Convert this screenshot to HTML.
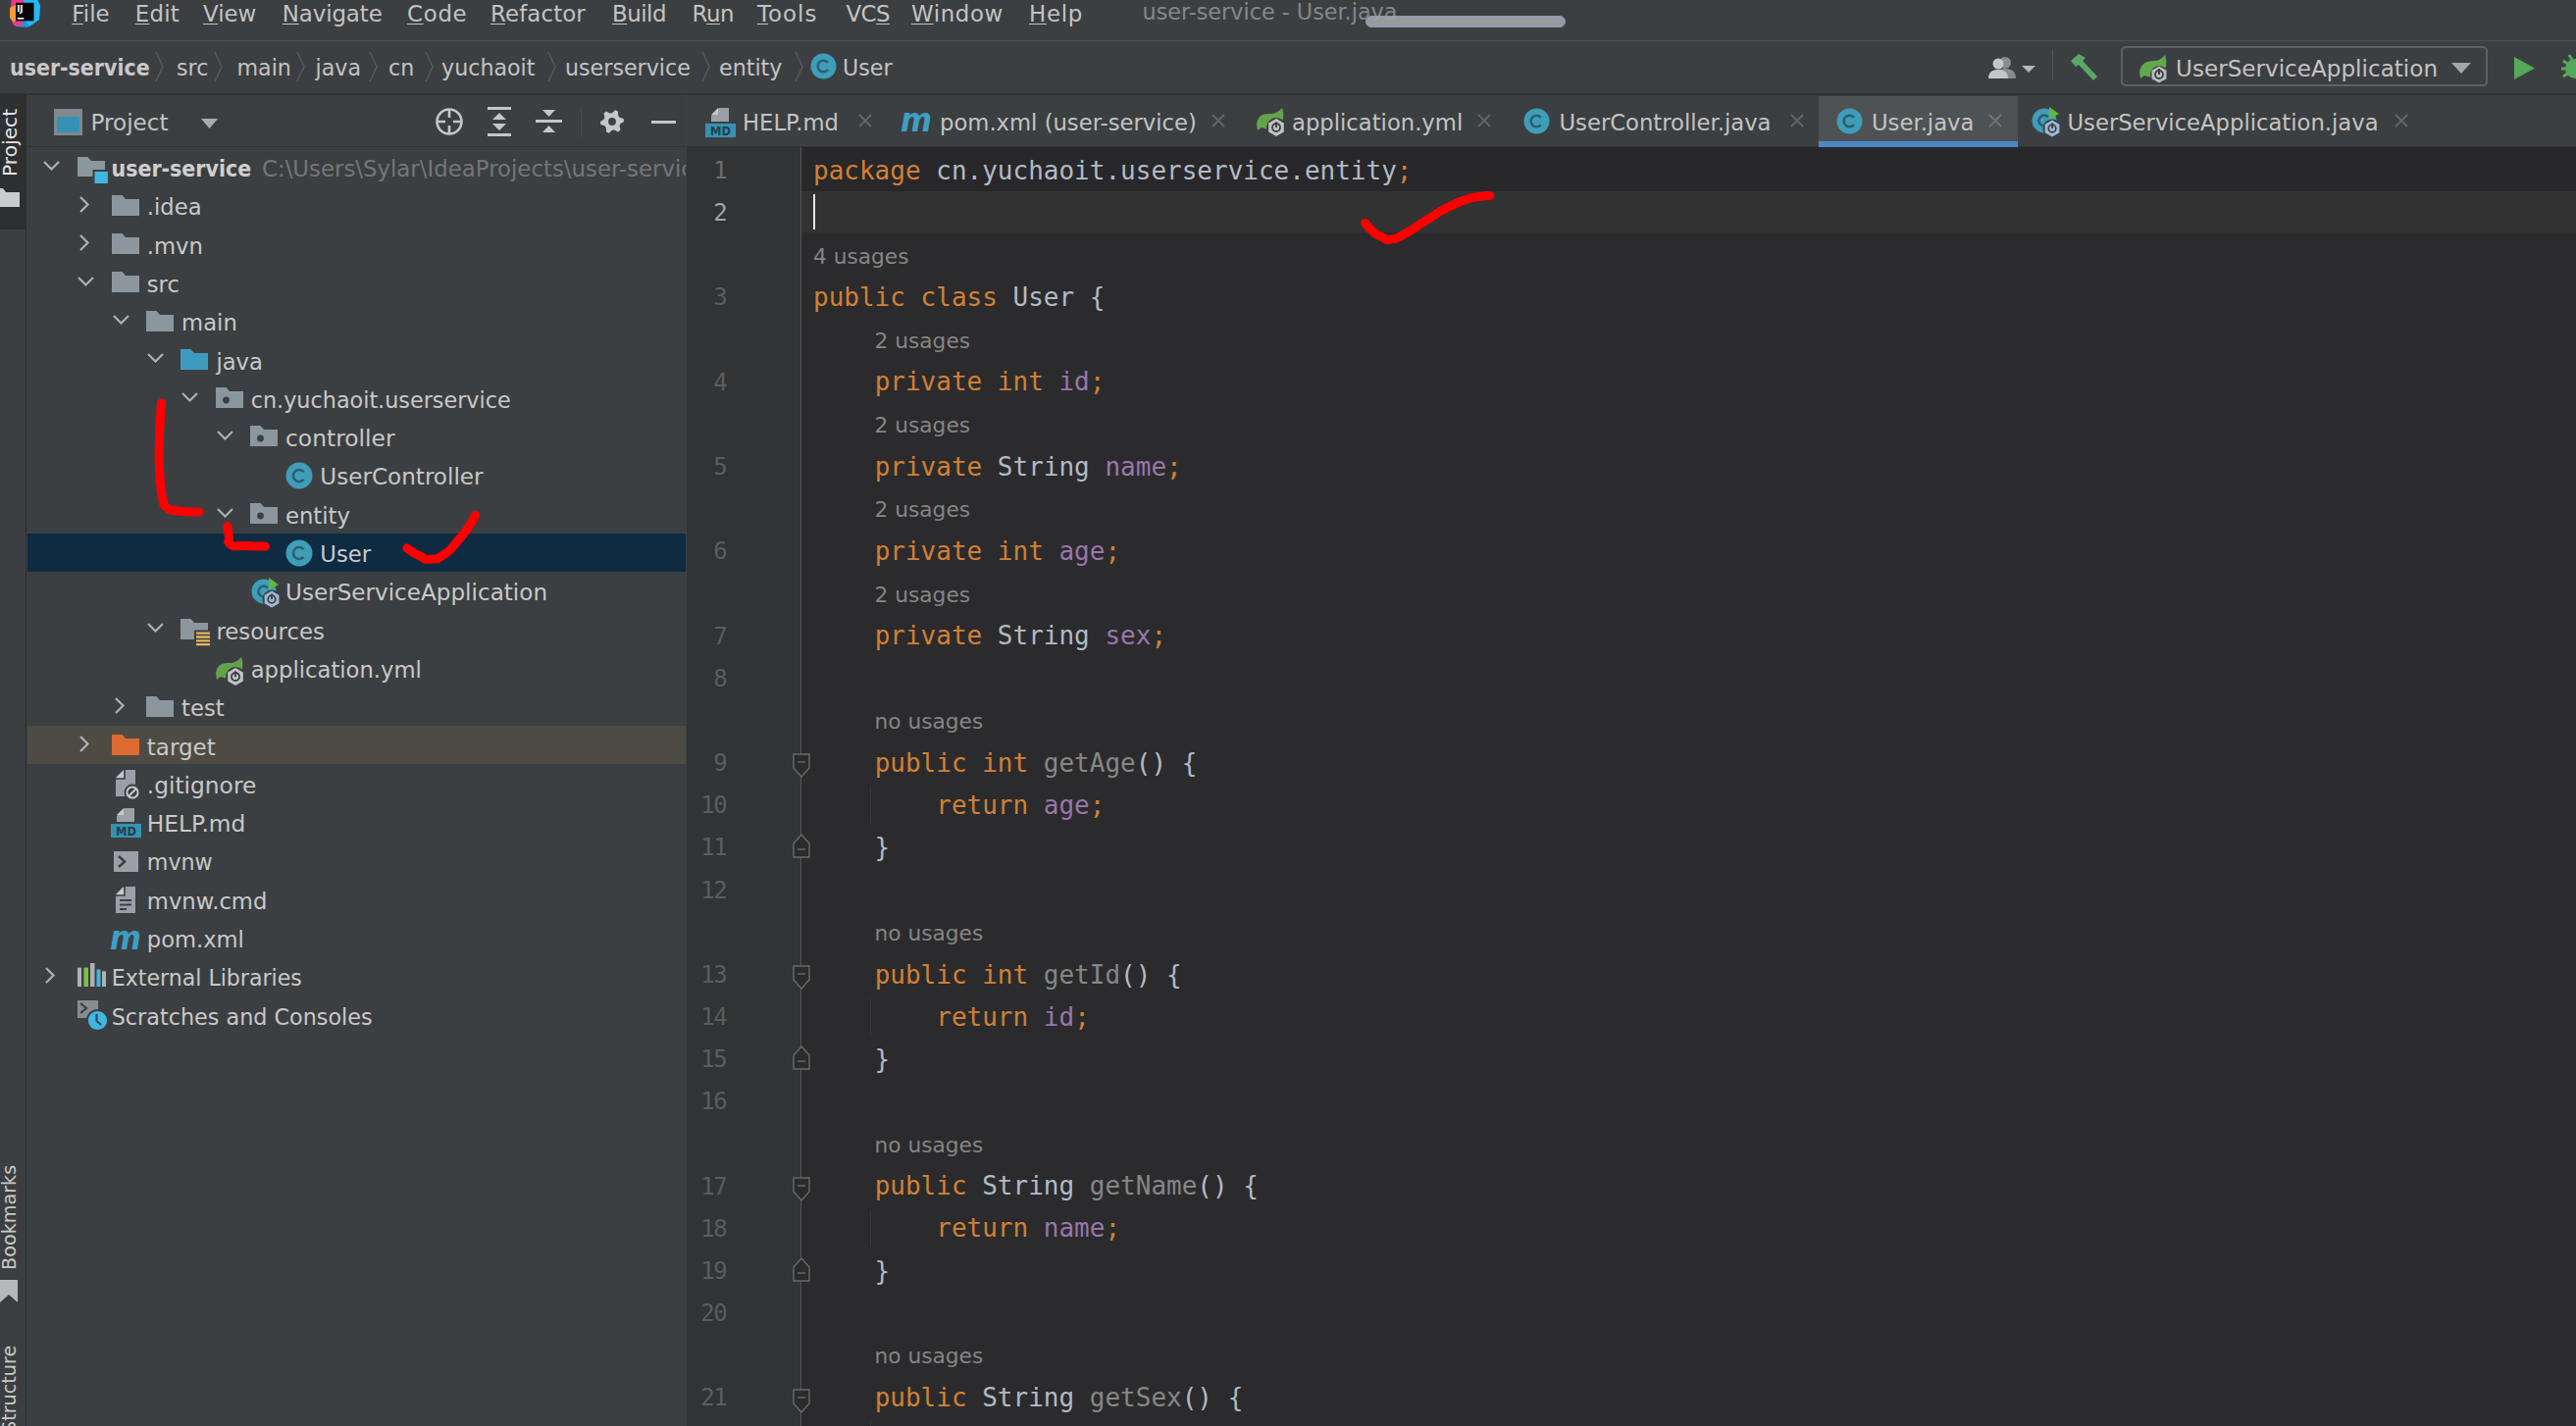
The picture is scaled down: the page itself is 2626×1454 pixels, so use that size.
<!DOCTYPE html>
<html lang="en"><head><meta charset="utf-8"><title>user-service - User.java</title>
<style>
*{box-sizing:border-box;margin:0;padding:0}
html,body{width:2626px;height:1454px;overflow:hidden;background:#3c3f41}
body{position:relative;font-family:"DejaVu Sans","Liberation Sans",sans-serif;font-size:22.7px;color:#bbbbbb;line-height:1}
.abs{position:absolute}
.t{position:absolute;white-space:pre;line-height:30px;height:30px}
.mn u{text-decoration:underline;text-underline-offset:1.5px;text-decoration-thickness:1.3px}
.code{position:absolute;left:829px;white-space:pre;font-family:"DejaVu Sans Mono","Liberation Mono",monospace;font-size:26px;line-height:43.15px;height:43.15px;color:#b1bac4}
.ln{position:absolute;left:700.4px;width:40px;text-align:right;font-family:"DejaVu Sans Mono","Liberation Mono",monospace;font-size:24px;letter-spacing:-1.4px;line-height:43.15px;height:43.15px;color:#5a5d60;margin-top:0.3px}
.hint{position:absolute;white-space:pre;font-size:21.7px;line-height:43.15px;height:43.15px;color:#858585}
.k{color:#d08036} .f{color:#9876aa} .u{color:#868686}
svg{position:absolute;overflow:visible}
</style></head>
<body>
<div class="abs" style="left:0;top:0;width:2626px;height:41.5px;background:#3c3f41;border-bottom:1.5px solid #4f5254"></div>
<svg style="left:10px;top:-4px" width="32" height="33" viewBox="0 0 32 33">
<polygon points="2,4 12,0 26,0 31,9 30,24 18,32 6,31 0,20" fill="#1f8fe3"/>
<polygon points="14,0 27,1 31,10 30,24 20,31 12,20" fill="#22b8f2"/>
<polygon points="2,4 13,0 16,12 12,31 4,30 0,20" fill="#f0388a"/>
<polygon points="0,12 6,9 9,20 4,27 0,22" fill="#f89a36"/>
<rect x="6" y="6.800" width="18.500" height="18.500" fill="#050505"/>
<rect x="7.800" y="22" width="6.500" height="1.600" fill="#fff"/>
<text x="7.200" y="16" font-family='"DejaVu Sans","Liberation Sans",sans-serif' font-weight="bold" font-size="8.500" fill="#fff">IJ</text>
</svg>
<div class="t mn" style="left:73.25px;top:-1px;font-size:22.9px;color:#c3c3c3"><u>F</u>ile</div>
<div class="t mn" style="left:137.75px;top:-1px;font-size:22.9px;color:#c3c3c3;letter-spacing:0.2px"><u>E</u>dit</div>
<div class="t mn" style="left:207px;top:-1px;font-size:22.9px;color:#c3c3c3"><u>V</u>iew</div>
<div class="t mn" style="left:287.75px;top:-1px;font-size:22.9px;color:#c3c3c3;letter-spacing:-0.1px"><u>N</u>avigate</div>
<div class="t mn" style="left:415px;top:-1px;font-size:22.9px;color:#c3c3c3;letter-spacing:0.7px"><u>C</u>ode</div>
<div class="t mn" style="left:500px;top:-1px;font-size:22.9px;color:#c3c3c3;letter-spacing:0.1px"><u>R</u>efactor</div>
<div class="t mn" style="left:624px;top:-1px;font-size:22.9px;color:#c3c3c3;letter-spacing:-0.5px"><u>B</u>uild</div>
<div class="t mn" style="left:705.5px;top:-1px;font-size:22.9px;color:#c3c3c3;letter-spacing:-0.4px">R<u>u</u>n</div>
<div class="t mn" style="left:772px;top:-1px;font-size:22.9px;color:#c3c3c3;letter-spacing:1.0px"><u>T</u>ools</div>
<div class="t mn" style="left:862.5px;top:-1px;font-size:22.9px;color:#c3c3c3;letter-spacing:-0.6px">VC<u>S</u></div>
<div class="t mn" style="left:929px;top:-1px;font-size:22.9px;color:#c3c3c3;letter-spacing:0.6px"><u>W</u>indow</div>
<div class="t mn" style="left:1049px;top:-1px;font-size:22.9px;color:#c3c3c3;letter-spacing:0.7px"><u>H</u>elp</div>
<div class="t" style="left:1164.5px;top:-3px;font-size:22.3px;color:#848789">user-service - User.java</div>
<div class="abs" style="left:1392px;top:16px;width:204px;height:12px;border-radius:6px;background:rgba(160,163,167,0.92);border:1px solid #809cc6"></div>
<div class="abs" style="left:0;top:95px;width:2626px;height:2px;background:#2f3133"></div>
<div class="t" style="left:10px;top:54px;font-family:'DejaVu Sans Condensed','DejaVu Sans',sans-serif;font-stretch:condensed;font-weight:bold;font-size:22.9px;color:#c9c9c9">user-service</div>
<div class="t" style="left:180px;top:54px;font-size:22.2px;color:#c3c3c3">src</div>
<div class="t" style="left:241.5px;top:54px;font-size:22.2px;color:#c3c3c3">main</div>
<div class="t" style="left:321.5px;top:54px;font-size:22.2px;color:#c3c3c3">java</div>
<div class="t" style="left:396px;top:54px;font-size:22.2px;color:#c3c3c3">cn</div>
<div class="t" style="left:450px;top:54px;font-size:22.2px;color:#c3c3c3">yuchaoit</div>
<div class="t" style="left:576px;top:54px;font-size:22.2px;color:#c3c3c3">userservice</div>
<div class="t" style="left:733px;top:54px;font-size:22.2px;color:#c3c3c3">entity</div>
<div class="t" style="left:859px;top:54px;font-size:22.2px;color:#c3c3c3">User</div>
<svg style="left:158px;top:53px" width="9" height="30" viewBox="0 0 9 30"><path d="M1 0 L8 15 L1 30" fill="none" stroke="#565a5c" stroke-width="1.5"/></svg>
<svg style="left:218px;top:53px" width="9" height="30" viewBox="0 0 9 30"><path d="M1 0 L8 15 L1 30" fill="none" stroke="#565a5c" stroke-width="1.5"/></svg>
<svg style="left:302px;top:53px" width="9" height="30" viewBox="0 0 9 30"><path d="M1 0 L8 15 L1 30" fill="none" stroke="#565a5c" stroke-width="1.5"/></svg>
<svg style="left:375.5px;top:53px" width="9" height="30" viewBox="0 0 9 30"><path d="M1 0 L8 15 L1 30" fill="none" stroke="#565a5c" stroke-width="1.5"/></svg>
<svg style="left:433px;top:53px" width="9" height="30" viewBox="0 0 9 30"><path d="M1 0 L8 15 L1 30" fill="none" stroke="#565a5c" stroke-width="1.5"/></svg>
<svg style="left:558px;top:53px" width="9" height="30" viewBox="0 0 9 30"><path d="M1 0 L8 15 L1 30" fill="none" stroke="#565a5c" stroke-width="1.5"/></svg>
<svg style="left:714.5px;top:53px" width="9" height="30" viewBox="0 0 9 30"><path d="M1 0 L8 15 L1 30" fill="none" stroke="#565a5c" stroke-width="1.5"/></svg>
<svg style="left:809.5px;top:53px" width="9" height="30" viewBox="0 0 9 30"><path d="M1 0 L8 15 L1 30" fill="none" stroke="#565a5c" stroke-width="1.5"/></svg>
<svg style="left:825.5px;top:54px" width="27" height="27" viewBox="0 0 28 28"><circle cx="14" cy="14" r="13.5" fill="#3f9db8"/><path d="M18.6 10.2 A6 6 0 1 0 18.6 17.8" fill="none" stroke="#2a5f73" stroke-width="2.6"/></svg>
<svg style="left:2027px;top:56px" width="50" height="26" viewBox="0 0 50 26">
<circle cx="17" cy="8" r="6" fill="#8a8d8f"/><path d="M6 24 Q6 14 17 14 Q28 14 28 24 Z" fill="#8a8d8f"/>
<circle cx="10" cy="9" r="5.5" fill="#c4c6c8"/><path d="M0 24 Q0 15 10 15 Q20 15 20 24 Z" fill="#c4c6c8"/>
<path d="M34 11 L48 11 L41 18 Z" fill="#b4b6b8"/></svg>
<div class="abs" style="left:2092px;top:51px;width:1px;height:31px;background:#55585a"></div>
<svg style="left:2109px;top:54px" width="31" height="28" viewBox="0 0 31 28">
<path d="M2 8 L10 1 L17 5 L14 8 L29 24 L25 28 L10 12 L7 14 Z" fill="#59a869"/></svg>
<div class="abs" style="left:2162px;top:47px;width:374px;height:41px;border:2px solid #5e6163;border-radius:5px"></div>
<svg style="left:2180px;top:56px" width="32" height="30" viewBox="0 0 32 30">
<path d="M1 18 Q2 6 16 6 Q22 6 27 0 Q31 12 24 19 Q16 25 6 21 L2 24 Z" fill="#5fa84b"/>
<circle cx="21" cy="20" r="9" fill="#3c3f41"/>
<polygon points="21,11.5 28.5,15.7 28.5,24.3 21,28.5 13.5,24.3 13.5,15.7" fill="#b9bcbe"/>
<circle cx="21" cy="20" r="4" fill="none" stroke="#3c3f41" stroke-width="1.8"/><rect x="20" y="14" width="2" height="6" fill="#3c3f41"/>
</svg>
<div class="t" style="left:2218px;top:55px;font-size:23.1px;color:#c3c3c3">UserServiceApplication</div>
<svg style="left:2499px;top:64px" width="20" height="11" viewBox="0 0 20 11"><path d="M0 0 L20 0 L10 11 Z" fill="#a4a6a8"/></svg>
<svg style="left:2563px;top:58px" width="21" height="23" viewBox="0 0 21 23"><path d="M0 0 L21 11.5 L0 23 Z" fill="#56a85a"/></svg>
<svg style="left:2611px;top:56px" width="26" height="26" viewBox="0 0 26 26"><circle cx="14" cy="14" r="10" fill="#56a85a"/><path d="M2 6 L8 10 M0 14 L6 14 M2 22 L8 18 M8 0 L11 5" stroke="#56a85a" stroke-width="3"/></svg>
<div class="abs" style="left:0;top:97px;width:27px;height:1357px;background:#3c3f41;border-right:1px solid #2a2c2e"></div>
<div class="abs" style="left:0;top:97px;width:27px;height:137px;background:#2d2f30"></div>
<div class="abs" style="left:-3px;top:180px;white-space:pre;font-size:20.2px;line-height:26px;height:26px;transform-origin:0 0;transform:rotate(-90deg);color:#e4e4e4">Project</div>
<svg style="left:-8px;top:192px" width="28" height="19" viewBox="0 0 28 19"><path d="M0 0 L11 0 L14 4 L28 4 L28 19 L0 19 Z" fill="#c9ccce"/></svg>
<div class="abs" style="left:-3px;top:1295px;white-space:pre;font-size:19.2px;line-height:26px;height:26px;transform-origin:0 0;transform:rotate(-90deg);color:#c8c8c8">Bookmarks</div>
<svg style="left:0px;top:1305px" width="18" height="23" viewBox="0 0 18 23"><path d="M0 0 L18 0 L18 23 L9 15 L0 23 Z" fill="#b6b9bb"/></svg>
<div class="abs" style="left:-3px;top:1460.5px;white-space:pre;font-size:19.2px;line-height:26px;height:26px;transform-origin:0 0;transform:rotate(-90deg);color:#c8c8c8">Structure</div>
<div class="abs" style="left:28px;top:149px;width:671px;height:1px;background:#313335"></div>
<div class="abs" style="left:699px;top:97px;width:1px;height:1357px;background:#3f4244"></div>
<svg style="left:55px;top:111px" width="29" height="27" viewBox="0 0 29 27">
<rect x="1.5" y="1.5" width="26" height="24" fill="#3592b4" stroke="#7e888e" stroke-width="3"/>
<rect x="1.5" y="1.5" width="26" height="6.5" fill="#7e888e"/></svg>
<div class="t" style="left:92.5px;top:110px;font-size:23.1px;color:#c3c3c3">Project</div>
<svg style="left:205px;top:121px" width="17" height="10" viewBox="0 0 17 10"><path d="M0 0 L17 0 L8.5 10 Z" fill="#a9acae"/></svg>
<svg style="left:443px;top:109px" width="30" height="30" viewBox="0 0 30 30"><circle cx="15" cy="15" r="12.5" fill="none" stroke="#c4c6c8" stroke-width="2.6"/>
<path d="M15 2 V11 M15 19 V28 M2 15 H11 M19 15 H28" stroke="#c4c6c8" stroke-width="2.6"/></svg>
<svg style="left:496px;top:109px" width="26" height="30" viewBox="0 0 26 30"><path d="M1 1.5 H25 M1 28.5 H25" stroke="#c4c6c8" stroke-width="3"/>
<path d="M13 6 L20 13 H6 Z M13 24 L20 17 H6 Z" fill="#c4c6c8"/></svg>
<svg style="left:546px;top:110px" width="27" height="27" viewBox="0 0 27 27"><path d="M0 13.5 H27" stroke="#c4c6c8" stroke-width="3"/>
<path d="M13.5 9 L20 2 H7 Z M13.5 18 L20 25 H7 Z" fill="#c4c6c8"/></svg>
<div class="abs" style="left:592px;top:108px;width:1px;height:32px;background:#4a4d4f"></div>
<svg style="left:610.5px;top:111px" width="26" height="26" viewBox="0 0 28 28"><polygon points="26.56,10.64 27.00,14.00 23.08,16.43 22.14,18.70 23.19,23.19 20.50,25.26 16.43,23.08 14.00,23.40 10.64,26.56 7.50,25.26 7.35,20.65 5.86,18.70 1.44,17.36 1.00,14.00 4.92,11.57 5.86,9.30 4.81,4.81 7.50,2.74 11.57,4.92 14.00,4.60 17.36,1.44 20.50,2.74 20.65,7.35 22.14,9.30" fill="#c4c6c8"/><circle cx="14" cy="14" r="4.2" fill="#3c3f41"/></svg>
<div class="abs" style="left:664px;top:122.5px;width:25px;height:3px;background:#c4c6c8"></div>
<div class="abs" style="left:28px;top:543.5px;width:671px;height:39.3px;background:#0e2b42"></div>
<div class="abs" style="left:28px;top:739.5px;width:671px;height:39.3px;background:#4e4c42"></div>
<svg style="left:44.0px;top:163.85000000000002px" width="17" height="10" viewBox="0 0 17 10"><path d="M1 1 L8.5 8.5 L16 1" fill="none" stroke="#aeb1b3" stroke-width="2.2"/></svg>
<svg style="left:78.5px;top:159.75px" width="32" height="28" viewBox="0 0 32 28"><path d="M0 0 L10.5 0 L14 4 L28 4 L28 20 L0 20 Z" fill="#8b969d"/><rect x="15.500" y="13" width="16" height="15" fill="#3c3f41"/><rect x="17.500" y="15" width="13.400" height="12" fill="#40b6e0"/></svg>
<div class="t" style="left:113.5px;top:157.1px;font-family:'DejaVu Sans Condensed','DejaVu Sans',sans-serif;font-stretch:condensed;font-weight:bold;font-size:22.9px;color:#cfcfcf">user-service</div>
<div class="t" style="left:267px;top:157.1px;width:432px;overflow:hidden;color:#737678;font-size:22.85px">C:\Users\Sylar\IdeaProjects\user-service</div>
<svg style="left:81.3px;top:200.15px" width="10" height="17" viewBox="0 0 10 17"><path d="M1 1 L8.5 8.5 L1 16" fill="none" stroke="#aeb1b3" stroke-width="2.2"/></svg>
<svg style="left:113.8px;top:198.65px" width="28" height="21" viewBox="0 0 28 21"><path d="M0 0 L10.5 0 L14 4 L28 4 L28 21 L0 21 Z" fill="#8b969d"/></svg>
<div class="t" style="left:149.8px;top:196.3px;color:#c8c8c8">.idea</div>
<svg style="left:81.3px;top:239.45000000000002px" width="10" height="17" viewBox="0 0 10 17"><path d="M1 1 L8.5 8.5 L1 16" fill="none" stroke="#aeb1b3" stroke-width="2.2"/></svg>
<svg style="left:113.8px;top:237.95000000000002px" width="28" height="21" viewBox="0 0 28 21"><path d="M0 0 L10.5 0 L14 4 L28 4 L28 21 L0 21 Z" fill="#8b969d"/></svg>
<div class="t" style="left:149.8px;top:235.7px;color:#c8c8c8">.mvn</div>
<svg style="left:79.3px;top:281.75px" width="17" height="10" viewBox="0 0 17 10"><path d="M1 1 L8.5 8.5 L16 1" fill="none" stroke="#aeb1b3" stroke-width="2.2"/></svg>
<svg style="left:113.8px;top:277.25px" width="28" height="21" viewBox="0 0 28 21"><path d="M0 0 L10.5 0 L14 4 L28 4 L28 21 L0 21 Z" fill="#8b969d"/></svg>
<div class="t" style="left:149.8px;top:274.9px;color:#c8c8c8">src</div>
<svg style="left:114.6px;top:321.05px" width="17" height="10" viewBox="0 0 17 10"><path d="M1 1 L8.5 8.5 L16 1" fill="none" stroke="#aeb1b3" stroke-width="2.2"/></svg>
<svg style="left:149.1px;top:316.55px" width="28" height="21" viewBox="0 0 28 21"><path d="M0 0 L10.5 0 L14 4 L28 4 L28 21 L0 21 Z" fill="#8b969d"/></svg>
<div class="t" style="left:185.1px;top:314.2px;color:#c8c8c8">main</div>
<svg style="left:149.89999999999998px;top:360.34999999999997px" width="17" height="10" viewBox="0 0 17 10"><path d="M1 1 L8.5 8.5 L16 1" fill="none" stroke="#aeb1b3" stroke-width="2.2"/></svg>
<svg style="left:184.39999999999998px;top:355.84999999999997px" width="28" height="21" viewBox="0 0 28 21"><path d="M0 0 L10.5 0 L14 4 L28 4 L28 21 L0 21 Z" fill="#3e9bbf"/></svg>
<div class="t" style="left:220.4px;top:353.5px;color:#c8c8c8">java</div>
<svg style="left:185.2px;top:399.65px" width="17" height="10" viewBox="0 0 17 10"><path d="M1 1 L8.5 8.5 L16 1" fill="none" stroke="#aeb1b3" stroke-width="2.2"/></svg>
<svg style="left:219.7px;top:395.15px" width="28" height="21" viewBox="0 0 28 21"><path d="M0 0 L10.5 0 L14 4 L28 4 L28 21 L0 21 Z" fill="#8b969d"/><circle cx="10.5" cy="13" r="3.4" fill="#3c3f41"/></svg>
<div class="t" style="left:255.7px;top:392.8px;color:#c8c8c8;font-size:22.3px">cn.yuchaoit.userservice</div>
<svg style="left:220.5px;top:438.95px" width="17" height="10" viewBox="0 0 17 10"><path d="M1 1 L8.5 8.5 L16 1" fill="none" stroke="#aeb1b3" stroke-width="2.2"/></svg>
<svg style="left:255.0px;top:434.45px" width="28" height="21" viewBox="0 0 28 21"><path d="M0 0 L10.5 0 L14 4 L28 4 L28 21 L0 21 Z" fill="#8b969d"/><circle cx="10.5" cy="13" r="3.4" fill="#3c3f41"/></svg>
<div class="t" style="left:291.0px;top:432.1px;color:#c8c8c8;font-size:23.4px">controller</div>
<svg style="left:290.79999999999995px;top:470.94999999999993px" width="28" height="28" viewBox="0 0 28 28"><circle cx="14" cy="14" r="13.5" fill="#3f9db8"/><path d="M18.6 10.2 A6 6 0 1 0 18.6 17.8" fill="none" stroke="#2a5f73" stroke-width="2.6"/></svg>
<div class="t" style="left:326.3px;top:471.4px;color:#c8c8c8;font-size:23.1px">UserController</div>
<svg style="left:220.5px;top:517.55px" width="17" height="10" viewBox="0 0 17 10"><path d="M1 1 L8.5 8.5 L16 1" fill="none" stroke="#aeb1b3" stroke-width="2.2"/></svg>
<svg style="left:255.0px;top:513.05px" width="28" height="21" viewBox="0 0 28 21"><path d="M0 0 L10.5 0 L14 4 L28 4 L28 21 L0 21 Z" fill="#8b969d"/><circle cx="10.5" cy="13" r="3.4" fill="#3c3f41"/></svg>
<div class="t" style="left:291.0px;top:510.8px;color:#c8c8c8">entity</div>
<svg style="left:290.79999999999995px;top:549.55px" width="28" height="28" viewBox="0 0 28 28"><circle cx="14" cy="14" r="13.5" fill="#3f9db8"/><path d="M18.6 10.2 A6 6 0 1 0 18.6 17.8" fill="none" stroke="#2a5f73" stroke-width="2.6"/></svg>
<div class="t" style="left:326.3px;top:550.0px;color:#c8c8c8">User</div>
<svg style="left:255.5px;top:587.8499999999999px" width="30" height="32" viewBox="0 0 30 32">
<circle cx="13" cy="15" r="12.5" fill="#3f9db8"/><path d="M17 11.6 A5.4 5.4 0 1 0 17 18.4" fill="none" stroke="#2a5f73" stroke-width="2.5"/>
<path d="M18 1 L28 8 L18 14 Z" fill="#62b543"/>
<circle cx="21" cy="23" r="9.5" fill="#3c3f41"/>
<polygon points="21,14.5 28.4,18.7 28.4,27.3 21,31.5 13.6,27.3 13.6,18.7" fill="#9db7d6"/>
<circle cx="21" cy="23" r="3.8" fill="none" stroke="#3c3f41" stroke-width="1.7"/><rect x="20.1" y="17.5" width="1.8" height="5.5" fill="#3c3f41"/></svg>
<div class="t" style="left:291.0px;top:589.3px;color:#c8c8c8;font-size:23.1px">UserServiceApplication</div>
<svg style="left:149.89999999999998px;top:635.4499999999999px" width="17" height="10" viewBox="0 0 17 10"><path d="M1 1 L8.5 8.5 L16 1" fill="none" stroke="#aeb1b3" stroke-width="2.2"/></svg>
<svg style="left:184.39999999999998px;top:630.65px" width="31" height="29" viewBox="0 0 31 29"><path d="M0 0 L10.5 0 L14 4 L28 4 L28 21 L0 21 Z" fill="#8b969d"/><rect x="14" y="11.500" width="17" height="17" fill="#3c3f41"/><path d="M16 14.700 H30 M16 18.500 H30 M16 22.300 H30 M16 26.100 H30" stroke="#e3b65c" stroke-width="2.300"/></svg>
<div class="t" style="left:220.4px;top:628.6px;color:#c8c8c8;font-size:22.8px">resources</div>
<svg style="left:220.2px;top:669.9499999999999px" width="30" height="30" viewBox="0 0 30 30">
<path d="M0 17 Q1 5 14 6 Q21 6 26 0 Q30 11 23 18 Q15 24 5 20 L1 23 Z" fill="#62a34a"/>
<circle cx="20" cy="20" r="10" fill="#3c3f41"/>
<polygon points="20,11 27.8,15.5 27.8,24.5 20,29 12.2,24.5 12.2,15.5" fill="#c0c3c5"/>
<circle cx="20" cy="20" r="4" fill="none" stroke="#3c3f41" stroke-width="1.8"/><rect x="19.1" y="14.2" width="1.8" height="6" fill="#3c3f41"/></svg>
<div class="t" style="left:255.7px;top:667.9px;color:#c8c8c8">application.yml</div>
<svg style="left:116.6px;top:711.0499999999998px" width="10" height="17" viewBox="0 0 10 17"><path d="M1 1 L8.5 8.5 L1 16" fill="none" stroke="#aeb1b3" stroke-width="2.2"/></svg>
<svg style="left:149.1px;top:709.5499999999998px" width="28" height="21" viewBox="0 0 28 21"><path d="M0 0 L10.5 0 L14 4 L28 4 L28 21 L0 21 Z" fill="#8b969d"/></svg>
<div class="t" style="left:185.1px;top:707.2px;color:#c8c8c8">test</div>
<svg style="left:81.3px;top:750.3499999999999px" width="10" height="17" viewBox="0 0 10 17"><path d="M1 1 L8.5 8.5 L1 16" fill="none" stroke="#aeb1b3" stroke-width="2.2"/></svg>
<svg style="left:113.8px;top:748.8499999999999px" width="28" height="21" viewBox="0 0 28 21"><path d="M0 0 L10.5 0 L14 4 L28 4 L28 21 L0 21 Z" fill="#dc6a31"/></svg>
<div class="t" style="left:149.8px;top:746.5px;color:#c8c8c8;font-size:23.0px">target</div>
<svg style="left:118.3px;top:784.8499999999999px" width="28" height="32" viewBox="0 0 28 32"><path d="M9 0 L20 0 L20 27 L0 27 L0 9 Z" fill="#9aa0a5"/><path d="M8 0 L8 8 L0 8 Z" fill="#c6c9cb"/><path d="M9 0 L9 9 L0 9" fill="none" stroke="#3c3f41" stroke-width="1.6"/><circle cx="17" cy="23" r="8.5" fill="#3c3f41"/><circle cx="17" cy="23" r="5.6" fill="none" stroke="#c6c9cb" stroke-width="2"/><path d="M13 27 L21 19" stroke="#c6c9cb" stroke-width="2"/></svg>
<div class="t" style="left:149.8px;top:785.8px;color:#c8c8c8;font-size:23.3px">.gitignore</div>
<svg style="left:113.3px;top:824.1499999999999px" width="31" height="30" viewBox="0 0 31 30">
<path d="M14 0 L24 0 L24 14 L6 14 L6 8 Z" fill="#9aa0a5"/><path d="M13 0 L13 7 L6 7 Z" fill="#c6c9cb"/>
<rect x="0" y="16" width="31" height="14" fill="#3592b4"/>
<text x="15.5" y="27.5" text-anchor="middle" font-family='"DejaVu Sans","Liberation Sans",sans-serif' font-weight="bold" font-size="11.5" fill="#23404d">MD</text></svg>
<div class="t" style="left:149.8px;top:825.1px;color:#c8c8c8;font-size:23.3px">HELP.md</div>
<svg style="left:115.8px;top:868.4499999999999px" width="25" height="21" viewBox="0 0 25 21"><rect width="25" height="21" fill="#9aa0a5"/><path d="M5 5 L11 10.5 L5 16" fill="none" stroke="#3c3f41" stroke-width="2.6"/></svg>
<div class="t" style="left:149.8px;top:864.4px;color:#c8c8c8;font-size:22.2px">mvnw</div>
<svg style="left:118.3px;top:903.7499999999999px" width="22" height="28" viewBox="0 0 22 28"><path d="M9 0 L20 0 L20 27 L0 27 L0 9 Z" fill="#9aa0a5"/><path d="M8 0 L8 8 L0 8 Z" fill="#c6c9cb"/><path d="M9 0 L9 9 L0 9" fill="none" stroke="#3c3f41" stroke-width="1.6"/><path d="M4 14 H16 M4 18.5 H16 M4 23 H11" stroke="#3c3f41" stroke-width="2"/></svg>
<div class="t" style="left:149.8px;top:903.7px;color:#c8c8c8">mvnw.cmd</div>
<svg style="left:113.3px;top:945.05px" width="32" height="26" viewBox="0 0 32 26"><text x="-1" y="23" font-family='"DejaVu Sans","Liberation Sans",sans-serif' font-style="italic" font-weight="bold" font-size="34" fill="#3e9ec4" textLength="32" lengthAdjust="spacingAndGlyphs">m</text></svg>
<div class="t" style="left:149.8px;top:943.0px;color:#c8c8c8;font-size:22.6px">pom.xml</div>
<svg style="left:46.0px;top:986.1499999999999px" width="10" height="17" viewBox="0 0 10 17"><path d="M1 1 L8.5 8.5 L1 16" fill="none" stroke="#aeb1b3" stroke-width="2.2"/></svg>
<svg style="left:79.0px;top:981.8499999999999px" width="29" height="24" viewBox="0 0 29 26" preserveAspectRatio="none">
<rect x="0" y="5" width="4" height="21" fill="#aeb1b3"/><rect x="6.5" y="5" width="4.5" height="21" fill="#7fc241"/>
<rect x="13" y="0" width="4.5" height="26" fill="#aeb1b3"/><rect x="19.5" y="7" width="4" height="19" fill="#40b6e0"/><rect x="25" y="9" width="4" height="17" fill="#aeb1b3"/></svg>
<div class="t" style="left:113.7px;top:982.3px;color:#c8c8c8;font-size:22.1px">External Libraries</div>
<svg style="left:79.0px;top:1019.6499999999999px" width="31" height="31" viewBox="0 0 31 31">
<rect x="0" y="0" width="21" height="18" fill="#868c91"/><path d="M3 3 L9 8 L3 13" fill="none" stroke="#3c3f41" stroke-width="2.2"/>
<circle cx="20.5" cy="20.5" r="11.5" fill="#3c3f41"/><circle cx="20.5" cy="20.5" r="9.6" fill="#40b6e0"/>
<path d="M19.5 14 V21 L24 25" fill="none" stroke="#2b4d5c" stroke-width="2.2"/></svg>
<div class="t" style="left:113.7px;top:1021.6px;color:#c8c8c8;font-size:22.3px">Scratches and Consoles</div>
<div class="abs" style="left:700px;top:150px;width:1926px;height:1304px;background:#2b2b2d"></div>
<div class="abs" style="left:700px;top:150px;width:116px;height:1304px;background:#313335"></div>
<div class="abs" style="left:816px;top:150px;width:1px;height:1304px;background:#555555"></div>
<div class="abs" style="left:700px;top:149px;width:1926px;height:1px;background:#323232"></div>
<div class="abs" style="left:1853.5px;top:98px;width:203px;height:52px;background:#4e5254"></div>
<div class="abs" style="left:1853.5px;top:144px;width:203px;height:6px;background:#4a88c7"></div>
<svg style="left:719px;top:109.5px" width="31" height="30" viewBox="0 0 31 30">
<path d="M14 0 L24 0 L24 14 L6 14 L6 8 Z" fill="#9aa0a5"/><path d="M13 0 L13 7 L6 7 Z" fill="#c6c9cb"/>
<rect x="0" y="16" width="31" height="14" fill="#3592b4"/>
<text x="15.5" y="27.5" text-anchor="middle" font-family='"DejaVu Sans","Liberation Sans",sans-serif' font-weight="bold" font-size="11.5" fill="#23404d">MD</text></svg>
<div class="t" style="left:757px;top:109.5px;color:#c3c3c3">HELP.md</div>
<svg style="left:874.5px;top:116px" width="14" height="14" viewBox="0 0 14 14"><path d="M1 1 L13 13 M13 1 L1 13" stroke="#636668" stroke-width="1.8"/></svg>
<svg style="left:919px;top:111px" width="32" height="26" viewBox="0 0 32 26"><text x="-1" y="23" font-family='"DejaVu Sans","Liberation Sans",sans-serif' font-style="italic" font-weight="bold" font-size="34" fill="#3e9ec4" textLength="32" lengthAdjust="spacingAndGlyphs">m</text></svg>
<div class="t" style="left:958px;top:109.5px;color:#c3c3c3">pom.xml (user-service)</div>
<svg style="left:1234.5px;top:116px" width="14" height="14" viewBox="0 0 14 14"><path d="M1 1 L13 13 M13 1 L1 13" stroke="#636668" stroke-width="1.8"/></svg>
<svg style="left:1281px;top:110px" width="30" height="30" viewBox="0 0 30 30">
<path d="M0 17 Q1 5 14 6 Q21 6 26 0 Q30 11 23 18 Q15 24 5 20 L1 23 Z" fill="#62a34a"/>
<circle cx="20" cy="20" r="10" fill="#3c3f41"/>
<polygon points="20,11 27.8,15.5 27.8,24.5 20,29 12.2,24.5 12.2,15.5" fill="#c0c3c5"/>
<circle cx="20" cy="20" r="4" fill="none" stroke="#3c3f41" stroke-width="1.8"/><rect x="19.1" y="14.2" width="1.8" height="6" fill="#3c3f41"/></svg>
<div class="t" style="left:1317px;top:109.5px;color:#c3c3c3">application.yml</div>
<svg style="left:1506px;top:116px" width="14" height="14" viewBox="0 0 14 14"><path d="M1 1 L13 13 M13 1 L1 13" stroke="#636668" stroke-width="1.8"/></svg>
<svg style="left:1552.5px;top:110px" width="27" height="27" viewBox="0 0 28 28"><circle cx="14" cy="14" r="13.5" fill="#3f9db8"/><path d="M18.6 10.2 A6 6 0 1 0 18.6 17.8" fill="none" stroke="#2a5f73" stroke-width="2.6"/></svg>
<div class="t" style="left:1589.5px;top:109.5px;color:#c3c3c3">UserController.java</div>
<svg style="left:1825px;top:116px" width="14" height="14" viewBox="0 0 14 14"><path d="M1 1 L13 13 M13 1 L1 13" stroke="#636668" stroke-width="1.8"/></svg>
<svg style="left:1871.5px;top:110px" width="27" height="27" viewBox="0 0 28 28"><circle cx="14" cy="14" r="13.5" fill="#3f9db8"/><path d="M18.6 10.2 A6 6 0 1 0 18.6 17.8" fill="none" stroke="#2a5f73" stroke-width="2.6"/></svg>
<div class="t" style="left:1908px;top:109.5px;color:#c3c3c3">User.java</div>
<svg style="left:2027px;top:116px" width="14" height="14" viewBox="0 0 14 14"><path d="M1 1 L13 13 M13 1 L1 13" stroke="#707375" stroke-width="1.8"/></svg>
<svg style="left:2071px;top:108px" width="30" height="32" viewBox="0 0 30 32">
<circle cx="13" cy="15" r="12.5" fill="#3f9db8"/><path d="M17 11.6 A5.4 5.4 0 1 0 17 18.4" fill="none" stroke="#2a5f73" stroke-width="2.5"/>
<path d="M18 1 L28 8 L18 14 Z" fill="#62b543"/>
<circle cx="21" cy="23" r="9.5" fill="#3c3f41"/>
<polygon points="21,14.5 28.4,18.7 28.4,27.3 21,31.5 13.6,27.3 13.6,18.7" fill="#9db7d6"/>
<circle cx="21" cy="23" r="3.8" fill="none" stroke="#3c3f41" stroke-width="1.7"/><rect x="20.1" y="17.5" width="1.8" height="5.5" fill="#3c3f41"/></svg>
<div class="t" style="left:2107.5px;top:109.5px;color:#c3c3c3">UserServiceApplication.java</div>
<svg style="left:2441px;top:116px" width="14" height="14" viewBox="0 0 14 14"><path d="M1 1 L13 13 M13 1 L1 13" stroke="#636668" stroke-width="1.8"/></svg>
<div class="abs" style="left:817px;top:150px;width:1809px;height:45px;background:#28282a"></div>
<div class="abs" style="left:817px;top:194.65px;width:1809px;height:42px;background:#323232"></div>
<div class="abs" style="left:828.5px;top:197.65px;width:2.5px;height:36.5px;background:#e6e6e6"></div>
<div class="ln" style="top:152.70px;color:#6b6e71">1</div>
<div class="code" style="top:152.70px"><span class="k">package</span> cn.yuchaoit.userservice.entity<span class="k">;</span></div>
<div class="ln" style="top:195.85px;color:#a2a2a2">2</div>
<div class="hint" style="left:829.0px;top:239.50px">4 usages</div>
<div class="ln" style="top:282.15px">3</div>
<div class="code" style="top:282.15px"><span class="k">public class</span> User {</div>
<div class="hint" style="left:891.6px;top:325.80px">2 usages</div>
<div class="ln" style="top:368.45px">4</div>
<div class="code" style="top:368.45px">    <span class="k">private int </span><span class="f">id</span><span class="k">;</span></div>
<div class="hint" style="left:891.6px;top:412.10px">2 usages</div>
<div class="ln" style="top:454.75px">5</div>
<div class="code" style="top:454.75px">    <span class="k">private</span> String <span class="f">name</span><span class="k">;</span></div>
<div class="hint" style="left:891.6px;top:498.40px">2 usages</div>
<div class="ln" style="top:541.05px">6</div>
<div class="code" style="top:541.05px">    <span class="k">private int </span><span class="f">age</span><span class="k">;</span></div>
<div class="hint" style="left:891.6px;top:584.70px">2 usages</div>
<div class="ln" style="top:627.35px">7</div>
<div class="code" style="top:627.35px">    <span class="k">private</span> String <span class="f">sex</span><span class="k">;</span></div>
<div class="ln" style="top:670.50px">8</div>
<div class="hint" style="left:891.6px;top:714.15px">no usages</div>
<div class="ln" style="top:756.80px">9</div>
<div class="code" style="top:756.80px">    <span class="k">public int </span><span class="u">getAge</span>() {</div>
<div class="ln" style="top:799.95px">10</div>
<div class="code" style="top:799.95px">        <span class="k">return </span><span class="f">age</span><span class="k">;</span></div>
<div class="abs" style="left:887px;top:802.0px;width:1px;height:37.1px;background:#383838"></div>
<div class="ln" style="top:843.10px">11</div>
<div class="code" style="top:843.10px">    }</div>
<div class="ln" style="top:886.25px">12</div>
<div class="hint" style="left:891.6px;top:929.90px">no usages</div>
<div class="ln" style="top:972.55px">13</div>
<div class="code" style="top:972.55px">    <span class="k">public int </span><span class="u">getId</span>() {</div>
<div class="ln" style="top:1015.70px">14</div>
<div class="code" style="top:1015.70px">        <span class="k">return </span><span class="f">id</span><span class="k">;</span></div>
<div class="abs" style="left:887px;top:1017.7px;width:1px;height:37.1px;background:#383838"></div>
<div class="ln" style="top:1058.85px">15</div>
<div class="code" style="top:1058.85px">    }</div>
<div class="ln" style="top:1102.00px">16</div>
<div class="hint" style="left:891.6px;top:1145.65px">no usages</div>
<div class="ln" style="top:1188.30px">17</div>
<div class="code" style="top:1188.30px">    <span class="k">public</span> String <span class="u">getName</span>() {</div>
<div class="ln" style="top:1231.45px">18</div>
<div class="code" style="top:1231.45px">        <span class="k">return </span><span class="f">name</span><span class="k">;</span></div>
<div class="abs" style="left:887px;top:1233.5px;width:1px;height:37.1px;background:#383838"></div>
<div class="ln" style="top:1274.60px">19</div>
<div class="code" style="top:1274.60px">    }</div>
<div class="ln" style="top:1317.75px">20</div>
<div class="hint" style="left:891.6px;top:1361.40px">no usages</div>
<div class="ln" style="top:1404.05px">21</div>
<div class="code" style="top:1404.05px">    <span class="k">public</span> String <span class="u">getSex</span>() {</div>
<div class="ln" style="top:1447.20px">22</div>
<div class="code" style="top:1447.20px">        <span class="k">return </span><span class="f">sex</span><span class="k">;</span></div>
<div class="abs" style="left:887px;top:1449.2px;width:1px;height:37.1px;background:#383838"></div>
<svg style="left:807.5px;top:768.4px" width="18" height="25" viewBox="0 0 18 25"><path d="M1 1 H17 V15 L9 24 L1 15 Z" fill="#2b2b2b" stroke="#6a6a6a" stroke-width="1.4"/><path d="M5 9 H13" stroke="#6a6a6a" stroke-width="1.4"/></svg>
<svg style="left:807.5px;top:984.1px" width="18" height="25" viewBox="0 0 18 25"><path d="M1 1 H17 V15 L9 24 L1 15 Z" fill="#2b2b2b" stroke="#6a6a6a" stroke-width="1.4"/><path d="M5 9 H13" stroke="#6a6a6a" stroke-width="1.4"/></svg>
<svg style="left:807.5px;top:1199.9px" width="18" height="25" viewBox="0 0 18 25"><path d="M1 1 H17 V15 L9 24 L1 15 Z" fill="#2b2b2b" stroke="#6a6a6a" stroke-width="1.4"/><path d="M5 9 H13" stroke="#6a6a6a" stroke-width="1.4"/></svg>
<svg style="left:807.5px;top:1415.6px" width="18" height="25" viewBox="0 0 18 25"><path d="M1 1 H17 V15 L9 24 L1 15 Z" fill="#2b2b2b" stroke="#6a6a6a" stroke-width="1.4"/><path d="M5 9 H13" stroke="#6a6a6a" stroke-width="1.4"/></svg>
<svg style="left:807.5px;top:850.2px" width="18" height="25" viewBox="0 0 18 25"><path d="M1 24 H17 V10 L9 1 L1 10 Z" fill="#2b2b2b" stroke="#6a6a6a" stroke-width="1.4"/><path d="M5 16 H13" stroke="#6a6a6a" stroke-width="1.4"/></svg>
<svg style="left:807.5px;top:1065.9px" width="18" height="25" viewBox="0 0 18 25"><path d="M1 24 H17 V10 L9 1 L1 10 Z" fill="#2b2b2b" stroke="#6a6a6a" stroke-width="1.4"/><path d="M5 16 H13" stroke="#6a6a6a" stroke-width="1.4"/></svg>
<svg style="left:807.5px;top:1281.7px" width="18" height="25" viewBox="0 0 18 25"><path d="M1 24 H17 V10 L9 1 L1 10 Z" fill="#2b2b2b" stroke="#6a6a6a" stroke-width="1.4"/><path d="M5 16 H13" stroke="#6a6a6a" stroke-width="1.4"/></svg>
<svg style="left:0;top:0" width="2626" height="1454" viewBox="0 0 2626 1454"><g fill="none" stroke="#ff0000" stroke-width="9" stroke-linecap="round" stroke-linejoin="round"><path d="M164.5 411.0 C164.0 418.0 163.8 418.0 163.1 432.0 C162.4 446.0 162.6 439.0 162.4 453.0 C162.2 467.0 161.9 460.0 162.4 474.0 C162.9 488.0 162.6 483.3 163.8 495.0 C165.0 506.7 163.9 501.5 166.0 509.0 C168.1 516.5 164.9 513.6 170.2 517.6 C175.5 521.6 171.1 519.5 182.0 521.0 C192.9 522.5 196.0 521.7 203.0 522.0"/><path d="M231.9 536.6 C232.4 540.1 232.1 540.7 233.3 547.0 C234.5 553.3 229.8 552.3 235.4 555.5 C241.0 558.7 238.3 556.0 250.0 556.5 C261.7 557.0 263.6 556.8 270.4 557.0"/><path d="M414.9 559.0 C419.1 561.6 419.6 563.0 427.5 566.7 C435.4 570.4 430.3 570.7 438.7 570.2 C447.1 569.7 443.4 571.6 452.8 565.3 C462.2 559.0 457.9 561.6 466.8 551.3 C475.7 541.0 473.6 543.2 479.4 534.5 C485.2 525.8 482.7 528.4 484.3 525.3"/><path d="M1391.7 227.5 C1394.3 230.3 1393.6 231.1 1399.4 235.9 C1405.2 240.7 1402.6 239.1 1409.1 241.8 C1415.6 244.5 1411.0 245.2 1418.9 243.9 C1426.8 242.6 1421.2 244.4 1432.9 238.0 C1444.6 231.6 1439.9 233.3 1453.9 224.7 C1467.9 216.1 1460.8 219.3 1474.8 212.1 C1488.8 204.9 1484.1 207.0 1495.8 203.1 C1507.5 199.2 1502.1 201.5 1509.8 200.3 C1517.5 199.1 1515.8 199.8 1518.8 199.6"/></g></svg>
</body></html>
